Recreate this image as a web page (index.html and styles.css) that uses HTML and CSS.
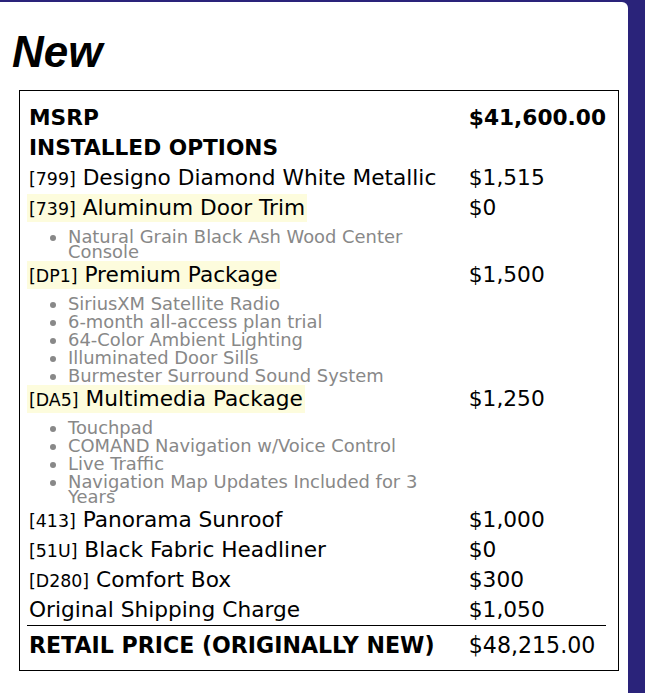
FILE: index.html
```html
<!DOCTYPE html>
<html lang="en">
<head>
  <meta charset="UTF-8" />
  <meta name="viewport" content="width=device-width, initial-scale=1.0" />
  <title>Window Sticker - New</title>
  <link rel="stylesheet" href="styles.css">
</head>
<body>
  <div class="panel">
    <h1 class="condition">New</h1>

    <div class="sticker">
      <table class="prices">
        <tr class="strong">
          <td class="label"><span class="name">MSRP</span></td>
          <td class="amount">$41,600.00</td>
        </tr>
        <tr class="strong">
          <td class="label"><span class="name">INSTALLED OPTIONS</span></td>
          <td class="amount"></td>
        </tr>
        <tr>
          <td class="label"><span class="name"><span class="code">[799]</span> Designo Diamond White Metallic</span></td>
          <td class="amount">$1,515</td>
        </tr>
        <tr>
          <td class="label">
            <span class="name pkg"><span class="code">[739]</span> Aluminum Door Trim</span>
            <ul class="contents">
              <li>Natural Grain Black Ash Wood Center Console</li>
            </ul>
          </td>
          <td class="amount">$0</td>
        </tr>
        <tr>
          <td class="label">
            <span class="name pkg"><span class="code">[DP1]</span> Premium Package</span>
            <ul class="contents">
              <li>SiriusXM Satellite Radio</li>
              <li>6-month all-access plan trial</li>
              <li>64-Color Ambient Lighting</li>
              <li>Illuminated Door Sills</li>
              <li>Burmester Surround Sound System</li>
            </ul>
          </td>
          <td class="amount">$1,500</td>
        </tr>
        <tr>
          <td class="label">
            <span class="name pkg"><span class="code">[DA5]</span> Multimedia Package</span>
            <ul class="contents">
              <li>Touchpad</li>
              <li>COMAND Navigation w/Voice Control</li>
              <li>Live Traffic</li>
              <li>Navigation Map Updates Included for 3 Years</li>
            </ul>
          </td>
          <td class="amount">$1,250</td>
        </tr>
        <tr>
          <td class="label"><span class="name"><span class="code">[413]</span> Panorama Sunroof</span></td>
          <td class="amount">$1,000</td>
        </tr>
        <tr>
          <td class="label"><span class="name"><span class="code">[51U]</span> Black Fabric Headliner</span></td>
          <td class="amount">$0</td>
        </tr>
        <tr>
          <td class="label"><span class="name"><span class="code">[D280]</span> Comfort Box</span></td>
          <td class="amount">$300</td>
        </tr>
        <tr>
          <td class="label"><span class="name">Original Shipping Charge</span></td>
          <td class="amount">$1,050</td>
        </tr>
        <tr class="total">
          <td class="label"><span class="name">RETAIL PRICE (ORIGINALLY NEW)</span></td>
          <td class="amount">$48,215.00</td>
        </tr>
      </table>
    </div>
  </div>
</body>
</html>
```

FILE: styles.css
```css
body {
  margin: 0;
  background: #2a237a;
  font-family: "DejaVu Sans", Verdana, sans-serif;
  color: #000;
}
.panel {
  width: 628px;
  min-height: 691px;
  margin-top: 2px;
  background: #fff;
  border-radius: 0 6px 0 0;
  padding-top: 25px;
  box-sizing: border-box;
}
.condition {
  margin: 0 0 13px 12px;
  font-family: "Liberation Sans", Arial, sans-serif;
  font-size: 44px;
  font-style: italic;
  font-weight: bold;
  line-height: 50px;
}
.sticker {
  width: 600px;
  margin-left: 19px;
  border: 1px solid #000;
  padding: 12px 12px 10px 7px;
  box-sizing: border-box;
}
.prices {
  width: 100%;
  border-collapse: collapse;
  border-spacing: 0;
  font-size: 21.7px;
  line-height: 30px;
}
.prices td {
  padding: 0;
  vertical-align: top;
}
.label {
  width: 443px;
}
.name {
  padding: 1px 2px 2px;
}
.pkg {
  background: #fdfcdd;
}
.code {
  font-size: 17.4px;
  line-height: 1;
}
.strong td {
  font-weight: bold;
}
.total td {
  border-top: 1px solid #000;
  padding-top: 4px;
  font-size: 22.1px;
}
.total .label {
  font-weight: bold;
}
.contents {
  margin: 3px 0 1px;
  padding-left: 41px;
  color: #888;
  font-size: 17.9px;
  line-height: 15px;
}
.contents li {
  padding-top: 3px;
}
```
